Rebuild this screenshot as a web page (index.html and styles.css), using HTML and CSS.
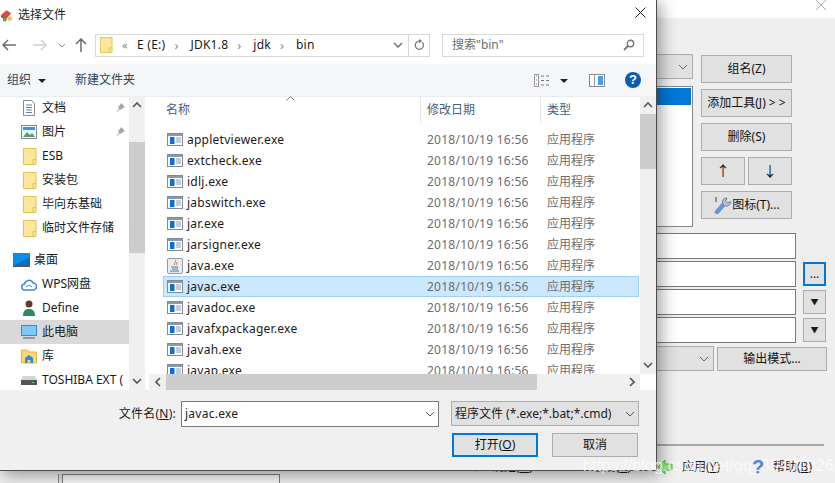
FILE: index.html
```html
<!DOCTYPE html>
<html lang="zh-CN">
<head>
<meta charset="utf-8">
<title>选择文件</title>
<link rel="stylesheet" href="styles.css">
</head>
<body>
<svg class="defs" width="0" height="0">
  <symbol id="exe" viewBox="0 0 16 13"><rect x=".5" y=".5" width="15" height="12" fill="#fff" stroke="#7f8a96"/><rect x="1" y="1" width="14" height="2" fill="#8f9aa8"/><rect x="3" y="4" width="4.500" height="7" fill="#0a6fd6"/><path d="M9 5h5M9 7h5M9 9h5" stroke="#8d99a8"/></symbol>
  <symbol id="folder" viewBox="0 0 14 17"><path d="M.5.500h12.500v16H.5z" fill="#fde79a" stroke="#e6c04e"/><path d="M10 16.500v-5h3" fill="none" stroke="#e6c04e"/></symbol>
</svg>

<div class="back-window">
  <div class="back-title"><svg class="back-close" viewBox="0 0 10 10"><path d="M0 0l10 10M10 0L0 10" stroke="#aaa" fill="none"/></svg></div>
  <div class="back-upper">
    <div class="back-left">
      <div class="back-combo"><svg class="chev" viewBox="0 0 10 6"><path d="M1 1l4 4 4-4" fill="none" stroke="#666"/></svg></div>
      <div class="back-list"><div class="back-sel"></div></div>
    </div>
    <div class="back-buttons">
      <div class="btn">组名(Z)</div>
      <div class="btn">添加工具(J) &gt; &gt;</div>
      <div class="btn">删除(S)</div>
      <div class="btn-pair"><div class="btn">↑</div><div class="btn">↓</div></div>
      <div class="btn"><svg class="wrench" viewBox="0 0 18 18"><path d="M4 16L11 8" stroke="#6f93d8" stroke-width="4.500" stroke-linecap="round"/><path d="M10 8a4 4 0 0 1 4-6l-1.500 3 2 2 3-1.500a4 4 0 0 1-6 4z" fill="#b9c6dc" stroke="#6b7b95"/><path d="M3 1v5" stroke="#345" stroke-width="1"/></svg>图标(T)...</div>
    </div>
  </div>
  <div class="back-form">
    <div class="field"></div><div></div>
    <div class="field"></div><div class="small-btn focus">...</div>
    <div class="field"></div><div class="small-btn">▼</div>
    <div class="field"></div><div class="small-btn">▼</div>
  </div>
  <div class="back-mode">
    <div class="mode-combo"><svg class="chev" viewBox="0 0 10 6"><path d="M1 1l4 4 4-4" fill="none" stroke="#666"/></svg></div>
    <div class="btn mode-btn">输出模式...</div>
  </div>
  <div class="back-rule"></div>
  <div class="back-actions">
    <span class="act act-ok"><svg class="act-ico" viewBox="0 0 14 14"><path d="M2 2l10 0-5 10z" fill="#d8623a"/></svg><span>确定(<u>O</u>)</span></span>
    <span class="act act-cancel"><svg class="act-ico" viewBox="0 0 14 14"><path d="M1 3h5l-2.500 7zM8 3h5l-2.500 7z" fill="#c2953c"/></svg><span>取消(<u>C</u>)</span></span>
    <span class="act act-apply"><svg class="act-ico" viewBox="0 0 16 16"><path d="M1 8l7-7v4h7v6H8v4z" fill="#9fe58a" stroke="#4db53b"/></svg><span>应用(<u>Y</u>)</span></span>
    <span class="act act-help"><span class="act-q">?</span><span>帮助(<u>B</u>)</span></span>
  </div>
  <div class="back-box"></div>
</div>

<div class="dialog">
  <div class="titlebar">
    <svg class="app-ico" viewBox="0 0 14 14"><path d="M1 7l6-5 5 3-5 6z" fill="#d9484a"/><path d="M1 7l6 4v2L1 9z" fill="#8e3135"/><circle cx="10.500" cy="11" r="2.500" fill="#e5c74b"/><circle cx="5" cy="12" r="2" fill="#58a84c"/></svg>
    <span>选择文件</span>
    <svg class="close" viewBox="0 0 11 11"><path d="M.5.500l10 10M10.500.500l-10 10" stroke="#222" fill="none"/></svg>
  </div>

  <div class="navbar">
    <svg class="nav-ico" viewBox="0 0 14 12"><path d="M6 1L1 6l5 5M1 6h13" stroke="#6d6d6d" stroke-width="1.500" fill="none"/></svg>
    <svg class="nav-ico fwd" viewBox="0 0 14 12"><path d="M8 1l5 5-5 5M13 6H0" stroke="#d0d0d0" stroke-width="1.500" fill="none"/></svg>
    <svg class="nav-chev" viewBox="0 0 8 5"><path d="M1 1l3 3 3-3" stroke="#8a8a8a" fill="none"/></svg>
    <svg class="nav-ico up" viewBox="0 0 12 14"><path d="M1 6l5-5 5 5M6 1v13" stroke="#6d6d6d" stroke-width="1.500" fill="none"/></svg>
    <div class="address">
      <svg class="addr-folder"><use href="#folder"/></svg>
      <span class="crumb-more">«</span>
      <span class="crumb">E (E:)</span><span class="sep">›</span>
      <span class="crumb">JDK1.8</span><span class="sep">›</span>
      <span class="crumb">jdk</span><span class="sep">›</span>
      <span class="crumb">bin</span>
      <svg class="addr-chev" viewBox="0 0 10 6"><path d="M1 1l4 4 4-4" stroke="#666" stroke-width="1.300" fill="none"/></svg>
      <span class="refresh"><svg viewBox="0 0 12 13" width="11" height="12"><path d="M9 3.500a4.500 4.500 0 1 1-3-1.300" stroke="#777" stroke-width="1.400" fill="none"/><path d="M5.500 0v4.500L9 2z" fill="#777"/></svg></span>
    </div>
    <div class="search">
      <span>搜索"bin"</span>
      <svg class="search-ico" viewBox="0 0 12 12"><circle cx="7.500" cy="4.500" r="3.200" stroke="#777" stroke-width="1.400" fill="none"/><path d="M5 7l-4 4" stroke="#777" stroke-width="1.800"/></svg>
    </div>
  </div>

  <div class="toolbar">
    <span class="tool">组织</span><span class="caret"></span>
    <span class="tool new">新建文件夹</span>
    <svg class="view-ico" viewBox="0 0 16 13"><rect x=".5" y=".5" width="4" height="12" fill="#fff" stroke="#9a9a9a"/><path d="M7 2h3M12 2h3M7 6.500h3M12 6.500h3M7 11h3M12 11h3" stroke="#777"/><path d="M2 2h1M2 6h1" stroke="#3a78c8"/><path d="M2 10h1" stroke="#d33"/></svg>
    <span class="caret view-caret"></span>
    <svg class="pane-ico" viewBox="0 0 16 13"><rect x=".5" y=".5" width="15" height="12" fill="#fff" stroke="#8a8a8a"/><rect x="9" y="2" width="5" height="9" fill="#4c9be8"/><path d="M5.500 1v11" stroke="#9a9a9a"/></svg>
    <span class="help">?</span>
  </div>

  <div class="main">
    <div class="side">
      <div class="tree">
        <div class="node"><svg class="ni" viewBox="0 0 16 16"><path d="M2.500.500h8l3 3v12h-11z" fill="#fff" stroke="#8a8a8a"/><path d="M5 5h6M5 7.500h6M5 10h6M5 12.500h6" stroke="#5a87b8"/></svg><span>文档</span><svg class="pin" viewBox="0 0 10 10"><path d="M6 0l4 4-2 1-2 2-1-1-4 4 3-5-1-1 2-2z" fill="#a6a6a6"/></svg></div>
        <div class="node"><svg class="ni" viewBox="0 0 16 14"><rect x=".5" y=".5" width="15" height="13" fill="#dff" stroke="#7d8a99"/><rect x="2" y="2" width="12" height="3" fill="#4a90d9"/><path d="M2 12l4-5 3 3 2-2 3 4z" fill="#6d8f76"/></svg><span>图片</span><svg class="pin" viewBox="0 0 10 10"><path d="M6 0l4 4-2 1-2 2-1-1-4 4 3-5-1-1 2-2z" fill="#a6a6a6"/></svg></div>
        <div class="node"><svg class="ni nf"><use href="#folder"/></svg><span>ESB</span></div>
        <div class="node"><svg class="ni nf"><use href="#folder"/></svg><span>安装包</span></div>
        <div class="node"><svg class="ni nf"><use href="#folder"/></svg><span>毕向东基础</span></div>
        <div class="node"><svg class="ni nf"><use href="#folder"/></svg><span>临时文件存储</span></div>
        <div class="node top"><svg class="ni ni-desk" viewBox="0 0 17 14"><rect width="17" height="13" fill="#0c8de8"/><path d="M0 13l17-9v9z" fill="#0a6fc4"/><rect y="13" width="17" height="1" fill="#555"/></svg><span>桌面</span></div>
        <div class="node"><svg class="ni ni-wide" viewBox="0 0 16 13"><path d="M4 12a3 3 0 0 1-.5-6A4.500 4.500 0 0 1 12 5a3.500 3.500 0 0 1 0 7z" fill="#fff" stroke="#3c8be0" stroke-width="1.500"/><path d="M5 9l3-2 3 2" stroke="#3c8be0" fill="none"/></svg><span>WPS网盘</span></div>
        <div class="node"><svg class="ni" viewBox="0 0 14 16"><circle cx="7" cy="4" r="3.500" fill="#5a3f30"/><path d="M1 16c0-6 3-7 6-7s6 1 6 7z" fill="#2f8a5c"/></svg><span>Define</span></div>
        <div class="node active"><svg class="ni ni-wide" viewBox="0 0 16 15"><rect x=".5" y=".5" width="15" height="10" fill="#7cc8f6" stroke="#3b89cc"/><path d="M2 13h12" stroke="#8a9bb0" stroke-width="2"/></svg><span>此电脑</span></div>
        <div class="node"><svg class="ni ni-wide" viewBox="0 0 16 15"><path d="M.5 1h6l2 2h7v11H.5z" fill="#f8d775" stroke="#e0b84a"/><path d="M4 14V9l4-3 4 3v5H9.500v-3h-3v3z" fill="#2b8ae0"/></svg><span>库</span></div>
        <div class="node"><svg class="ni ni-wide" viewBox="0 0 16 9"><path d="M2 0h12l2 4v5H0V4z" fill="#d4d4d4"/><rect y="4" width="16" height="5" fill="#555"/><rect x="11" y="6" width="2" height="1" fill="#5ad65a"/></svg><span class="clip">TOSHIBA EXT (</span></div>
      </div>
      <div class="vscroll side-scroll">
        <svg class="arr" viewBox="0 0 10 6"><path d="M1 5l4-4 4 4" stroke="#555" stroke-width="1.600" fill="none"/></svg>
        <div class="side-spacer"></div>
        <div class="thumb side-thumb"></div>
        <div class="grow"></div>
        <svg class="arr" viewBox="0 0 10 6"><path d="M1 1l4 4 4-4" stroke="#555" stroke-width="1.600" fill="none"/></svg>
      </div>
    </div>

    <div class="content">
      <div class="content-top">
        <div class="files">
          <div class="head">
            <span class="h-name">名称<svg class="sort" viewBox="0 0 9 5"><path d="M.5 4.500l4-4 4 4" stroke="#777" fill="none"/></svg></span>
            <span class="h-date">修改日期</span>
            <span class="h-type">类型</span>
          </div>
          <div class="rows">
            <div class="row"><svg class="fi"><use href="#exe"/></svg><span>appletviewer.exe</span><span class="date">2018/10/19 16:56</span><span class="type">应用程序</span></div>
            <div class="row"><svg class="fi"><use href="#exe"/></svg><span>extcheck.exe</span><span class="date">2018/10/19 16:56</span><span class="type">应用程序</span></div>
            <div class="row"><svg class="fi"><use href="#exe"/></svg><span>idlj.exe</span><span class="date">2018/10/19 16:56</span><span class="type">应用程序</span></div>
            <div class="row"><svg class="fi"><use href="#exe"/></svg><span>jabswitch.exe</span><span class="date">2018/10/19 16:56</span><span class="type">应用程序</span></div>
            <div class="row"><svg class="fi"><use href="#exe"/></svg><span>jar.exe</span><span class="date">2018/10/19 16:56</span><span class="type">应用程序</span></div>
            <div class="row"><svg class="fi"><use href="#exe"/></svg><span>jarsigner.exe</span><span class="date">2018/10/19 16:56</span><span class="type">应用程序</span></div>
            <div class="row"><svg class="fi fi-java" viewBox="0 0 16 16"><rect x=".5" y=".5" width="15" height="15" rx="1.500" fill="#e8edf3" stroke="#8d99a8"/><path d="M8 2c2 2-2 3 0 5M10 4c0 1-1 2-.5 3" stroke="#d9722a" fill="none"/><path d="M4 9h7M5 11h6M3 13h9" stroke="#4a78a8"/></svg><span>java.exe</span><span class="date">2018/10/19 16:56</span><span class="type">应用程序</span></div>
            <div class="row selected"><svg class="fi"><use href="#exe"/></svg><span>javac.exe</span><span class="date">2018/10/19 16:56</span><span class="type">应用程序</span></div>
            <div class="row"><svg class="fi"><use href="#exe"/></svg><span>javadoc.exe</span><span class="date">2018/10/19 16:56</span><span class="type">应用程序</span></div>
            <div class="row"><svg class="fi"><use href="#exe"/></svg><span>javafxpackager.exe</span><span class="date">2018/10/19 16:56</span><span class="type">应用程序</span></div>
            <div class="row"><svg class="fi"><use href="#exe"/></svg><span>javah.exe</span><span class="date">2018/10/19 16:56</span><span class="type">应用程序</span></div>
            <div class="row"><svg class="fi"><use href="#exe"/></svg><span>javap.exe</span><span class="date">2018/10/19 16:56</span><span class="type">应用程序</span></div>
          </div>
        </div>
        <div class="vscroll file-scroll">
          <svg class="arr" viewBox="0 0 10 6"><path d="M1 5l4-4 4 4" stroke="#555" stroke-width="1.600" fill="none"/></svg>
          <div class="thumb file-thumb"></div>
          <div class="grow"></div>
          <svg class="arr" viewBox="0 0 10 6"><path d="M1 1l4 4 4-4" stroke="#555" stroke-width="1.600" fill="none"/></svg>
        </div>
      </div>
      <div class="hscroll">
        <div class="h-track">
          <svg class="harr" viewBox="0 0 6 10"><path d="M5 1L1 5l4 4" stroke="#555" stroke-width="1.600" fill="none"/></svg>
          <div class="h-thumb"></div>
          <div class="grow"></div>
          <svg class="harr" viewBox="0 0 6 10"><path d="M1 1l4 4-4 4" stroke="#555" stroke-width="1.600" fill="none"/></svg>
        </div>
      </div>
    </div>
  </div>

  <div class="footer">
    <div class="foot-row">
      <label class="fname-label">文件名(<u>N</u>):</label>
      <div class="fname"><span class="fname-val">javac.exe</span><svg class="chev-in" viewBox="0 0 10 6"><path d="M1 1l4 4 4-4" fill="none" stroke="#555"/></svg></div>
      <div class="ftype">程序文件 (*.exe;*.bat;*.cmd)<svg class="chev-in" viewBox="0 0 10 6"><path d="M1 1l4 4 4-4" fill="none" stroke="#555"/></svg></div>
    </div>
    <div class="foot-actions">
      <div class="btn open">打开(<u>O</u>)</div>
      <div class="btn cancel">取消</div>
    </div>
  </div>
</div>

<div class="watermark">https://blog.csdn.net/qq_39404026</div>
</body>
</html>
```

FILE: styles.css
```css
* { box-sizing: border-box; }
html, body { margin: 0; padding: 0; }
body {
  position: relative;
  width: 835px;
  height: 483px;
  overflow: hidden;
  background: #efefef;
  font: 12px/16px "Noto Sans", "Noto Sans CJK SC", sans-serif;
  color: #1a1a1a;
}
.defs { position: absolute; }
u { text-underline-offset: 1px; }
.grow { flex: 1; }

/* background window */
.back-window {
  position: absolute;
  inset: 0;
  padding-left: 656px;
  background: #efefef;
}
.back-title { height: 18px; background: #fff; display: flex; justify-content: flex-end; padding-right: 9px; }
.back-close { width: 10px; height: 10px; }
.back-upper { display: flex; gap: 8px; padding-top: 36px; }
.back-left { width: 37px; }
.back-combo { height: 25px; background: #e1e1e1; border: 1px solid #adadad; border-left: 0; display: flex; align-items: center; justify-content: flex-end; padding-right: 4px; }
.chev { width: 10px; height: 6px; }
.back-list { height: 141px; margin-top: 7px; background: #fff; border: 1px solid #828790; border-left: 0; padding: 1px 1px 0 0; }
.back-sel { height: 17px; background: #0078d7; }
.back-buttons { width: 91px; display: flex; flex-direction: column; gap: 6px; padding-top: 1px; }
.btn {
  height: 28px;
  background: #e1e1e1;
  border: 1px solid #adadad;
  display: flex;
  align-items: center;
  justify-content: center;
  white-space: nowrap;
  color: #111;
}
.btn-pair { display: flex; justify-content: space-between; }
.btn-pair .btn { width: 44px; font-size: 14px; }
.wrench { width: 18px; height: 18px; margin-right: 1px; }
.back-form { display: grid; grid-template-columns: 140px 23px; column-gap: 7px; row-gap: 2px; margin-top: 6px; }
.field { height: 26px; background: #fff; border: 1px solid #7a7a7a; border-left: 0; }
.small-btn { height: 24px; margin-top: 1px; background: #e1e1e1; border: 1px solid #adadad; font-size: 8px; display: flex; align-items: center; justify-content: center; }
.small-btn.focus { border: 2px solid #0078d7; font-size: 12px; }
.back-mode { display: flex; gap: 3px; margin-top: 3px; }
.mode-combo { width: 58px; height: 25px; background: #e1e1e1; border: 1px solid #adadad; border-left: 0; display: flex; align-items: center; justify-content: flex-end; padding-right: 4px; }
.btn.mode-btn { width: 110px; height: 24px; margin-top: 1px; }
.back-rule { width: 168px; height: 2px; background: #a8a8a8; margin-top: 73px; }
.back-actions {
  position: absolute;
  left: 470px;
  top: 458px;
  display: flex;
  align-items: center;
  height: 18px;
  white-space: nowrap;
}
.act { display: flex; align-items: center; gap: 8px; }
.act-ico { width: 14px; height: 14px; }
.act-ok { width: 92px; }
.act-cancel { width: 93px; gap: 16px; }
.act-apply { width: 97px; gap: 9px; padding-left: 2px; }
.act-apply .act-ico { width: 16px; height: 16px; }
.act-help { gap: 4px; }
.act-q { color: #4f86d8; font: bold 20px/18px "Liberation Sans", sans-serif; width: 17px; }
.back-box {
  position: absolute;
  left: 62px;
  top: 474px;
  width: 218px;
  height: 20px;
  background: #f7f7f7;
  border: 1px solid #7c7c7c;
  box-shadow: -3px 0 0 #e4e4e4, -4px 0 0 #8a8a8a;
}

/* dialog */
.dialog {
  position: absolute;
  left: 0;
  top: 0;
  width: 657px;
  height: 471px;
  background: #fff;
  border-right: 1px solid #4c4c4c;
  border-bottom: 1px solid #4c4c4c;
  box-shadow: 3px 3px 16px rgba(0, 0, 0, .42);
  display: flex;
  flex-direction: column;
}
.titlebar { height: 30px; display: flex; align-items: center; gap: 5px; flex: none; }
.app-ico { width: 13px; height: 14px; }
.close { width: 11px; height: 11px; margin-left: auto; margin-right: 10px; margin-top: -5px; }

.navbar { height: 34px; display: flex; align-items: center; flex: none; padding-bottom: 4px; }
.nav-ico { width: 14px; height: 12px; margin-left: 2px; flex: none; }
.nav-ico.fwd { margin-left: 17px; }
.nav-chev { width: 8px; height: 5px; margin-left: 11px; flex: none; }
.nav-ico.up { width: 12px; height: 14px; margin-left: 9px; }
.address {
  width: 335px;
  height: 23px;
  margin-left: 8px;
  border: 1px solid #d9d9d9;
  display: flex;
  align-items: center;
  padding-left: 4px;
  flex: none;
}
.addr-folder { width: 13px; height: 16px; flex: none; }
.crumb-more { color: #888; margin-left: 9px; width: 12px; font-size: 11px; }
.crumb { padding-left: 3px; white-space: nowrap; letter-spacing: .25px; }
.sep { color: #888; width: 22px; text-align: center; font-size: 13px; }
.addr-chev { width: 10px; height: 6px; margin-left: auto; margin-right: 5px; flex: none; }
.refresh { width: 21px; height: 21px; border-left: 1px solid #d9d9d9; display: flex; align-items: center; justify-content: center; flex: none; }
.search {
  width: 202px;
  height: 23px;
  margin-left: 12px;
  border: 1px solid #d9d9d9;
  display: flex;
  align-items: center;
  padding: 0 8px 0 9px;
  color: #6d6d6d;
  flex: none;
}
.search-ico { width: 12px; height: 12px; margin-left: auto; }

.toolbar { height: 32px; background: #f5f6f7; display: flex; align-items: center; padding-left: 7px; flex: none; color: #33435a; }
.caret { width: 0; height: 0; border: 4px solid transparent; border-top: 4px solid #14233c; border-bottom: 0; margin-left: 7px; margin-top: 1px; }
.tool.new { margin-left: 29px; }
.view-ico { width: 16px; height: 13px; margin-left: 399px; }
.view-caret { margin-left: 10px; }
.pane-ico { width: 16px; height: 13px; margin-left: 21px; }
.help { width: 16px; height: 16px; margin-left: 20px; border-radius: 50%; background: #0a5db0; color: #fff; font: bold 13px/16px "Liberation Sans", sans-serif; text-align: center; }

.main { height: 294px; display: flex; flex: none; box-shadow: inset 0 1px 0 #e9ecef; }
.side { width: 147px; display: flex; flex: none; overflow: hidden; }
.tree { width: 129px; height: 100%; overflow: hidden; flex: none; }
.node { height: 24px; display: flex; align-items: center; padding-left: 21px; position: relative; white-space: nowrap; }
.node span { line-height: 24px; }
.node.top { margin-top: 8px; padding-left: 13px; }
.node.active { background: #d9d9d9; }
.ni { width: 16px; height: 16px; margin-right: 5px; flex: none; }
.ni.nf { width: 14px; height: 17px; margin-left: 2px; margin-right: 5px; }
.ni-desk { width: 17px; height: 14px; margin-right: 4px; }
.ni-wide { width: 16px; height: 15px; }
.clip { overflow: hidden; }
.pin { position: absolute; right: 4px; top: 7px; width: 10px; height: 10px; }
.vscroll { display: flex; flex-direction: column; width: 16px; background: #f0f0f0; align-items: center; flex: none; }
.arr { width: 10px; height: 6px; margin: 6px 0; flex: none; }
.thumb { width: 100%; background: #cdcdcd; flex: none; }
.side-spacer { height: 28px; flex: none; }
.side-thumb { height: 111px; }
.file-thumb { height: 55px; }

.content { width: 509px; display: flex; flex-direction: column; flex: none; }
.content-top { height: 278px; display: flex; }
.files { width: 493px; overflow: hidden; }
.head { height: 27px; display: flex; color: #4c607a; line-height: 27px; }
.head span { display: block; flex: none; position: relative; }
.h-name { width: 273px; padding-left: 19px; }
.h-date { width: 120px; padding-left: 6px; border-left: 1px solid #e5e5e5; }
.h-type { padding-left: 6px; border-left: 1px solid #e5e5e5; width: 100px; }
.sort { position: absolute; left: 139px; top: 0; width: 9px; height: 5px; }
.rows { padding: 6px 1px 0 16px; }
.row { height: 21px; display: grid; grid-template-columns: 20px 240px 120px 1fr; align-items: center; padding-left: 4px; border: 1px solid transparent; border-left: 0; border-right: 0; white-space: nowrap; letter-spacing: .25px; }
.row .date, .row .type { color: #6d6d6d; }
.row .type { letter-spacing: 0; }
.row.selected { background: #cce8ff; border: 1px solid #99d1ff; padding-left: 3px; }
.fi { width: 16px; height: 13px; }
.fi-java { width: 16px; height: 16px; }

.hscroll { height: 16px; padding: 0 16px 0 2px; }
.h-track { height: 16px; background: #f0f0f0; display: flex; align-items: center; }
.harr { width: 6px; height: 10px; margin: 0 5px 0 6px; flex: none; }
.h-thumb { width: 371px; height: 100%; background: #cdcdcd; flex: none; }

.footer { flex: 1; background: #f0f0f0; padding: 11px 17px 0 0; }
.foot-row { display: flex; align-items: flex-start; }
.fname-label { width: 176px; text-align: right; line-height: 26px; white-space: nowrap; letter-spacing: .25px; }
.fname { width: 258px; height: 26px; margin-left: 5px; background: #fff; border: 1px solid #7a7a7a; padding: 0 3px; line-height: 24px; display: flex; align-items: center; justify-content: space-between; }
.fname-val { letter-spacing: .25px; }
.ftype { width: 188px; height: 25px; margin-left: 12px; background: #e1e1e1; border: 1px solid #adadad; padding: 0 3px; display: flex; align-items: center; justify-content: space-between; white-space: nowrap; }
.chev-in { width: 10px; height: 6px; flex: none; }
.foot-actions { display: flex; padding-left: 452px; gap: 14px; margin-top: 6px; }
.btn.open, .btn.cancel { width: 86px; height: 24px; }
.btn.open { border: 2px solid #0078d7; }

.watermark {
  position: absolute;
  left: 583px;
  top: 456px;
  font: 16px/20px "Liberation Sans", sans-serif;
  letter-spacing: .15px;
  color: rgba(255, 255, 255, .7);
  white-space: nowrap;
  pointer-events: none;
}
```
